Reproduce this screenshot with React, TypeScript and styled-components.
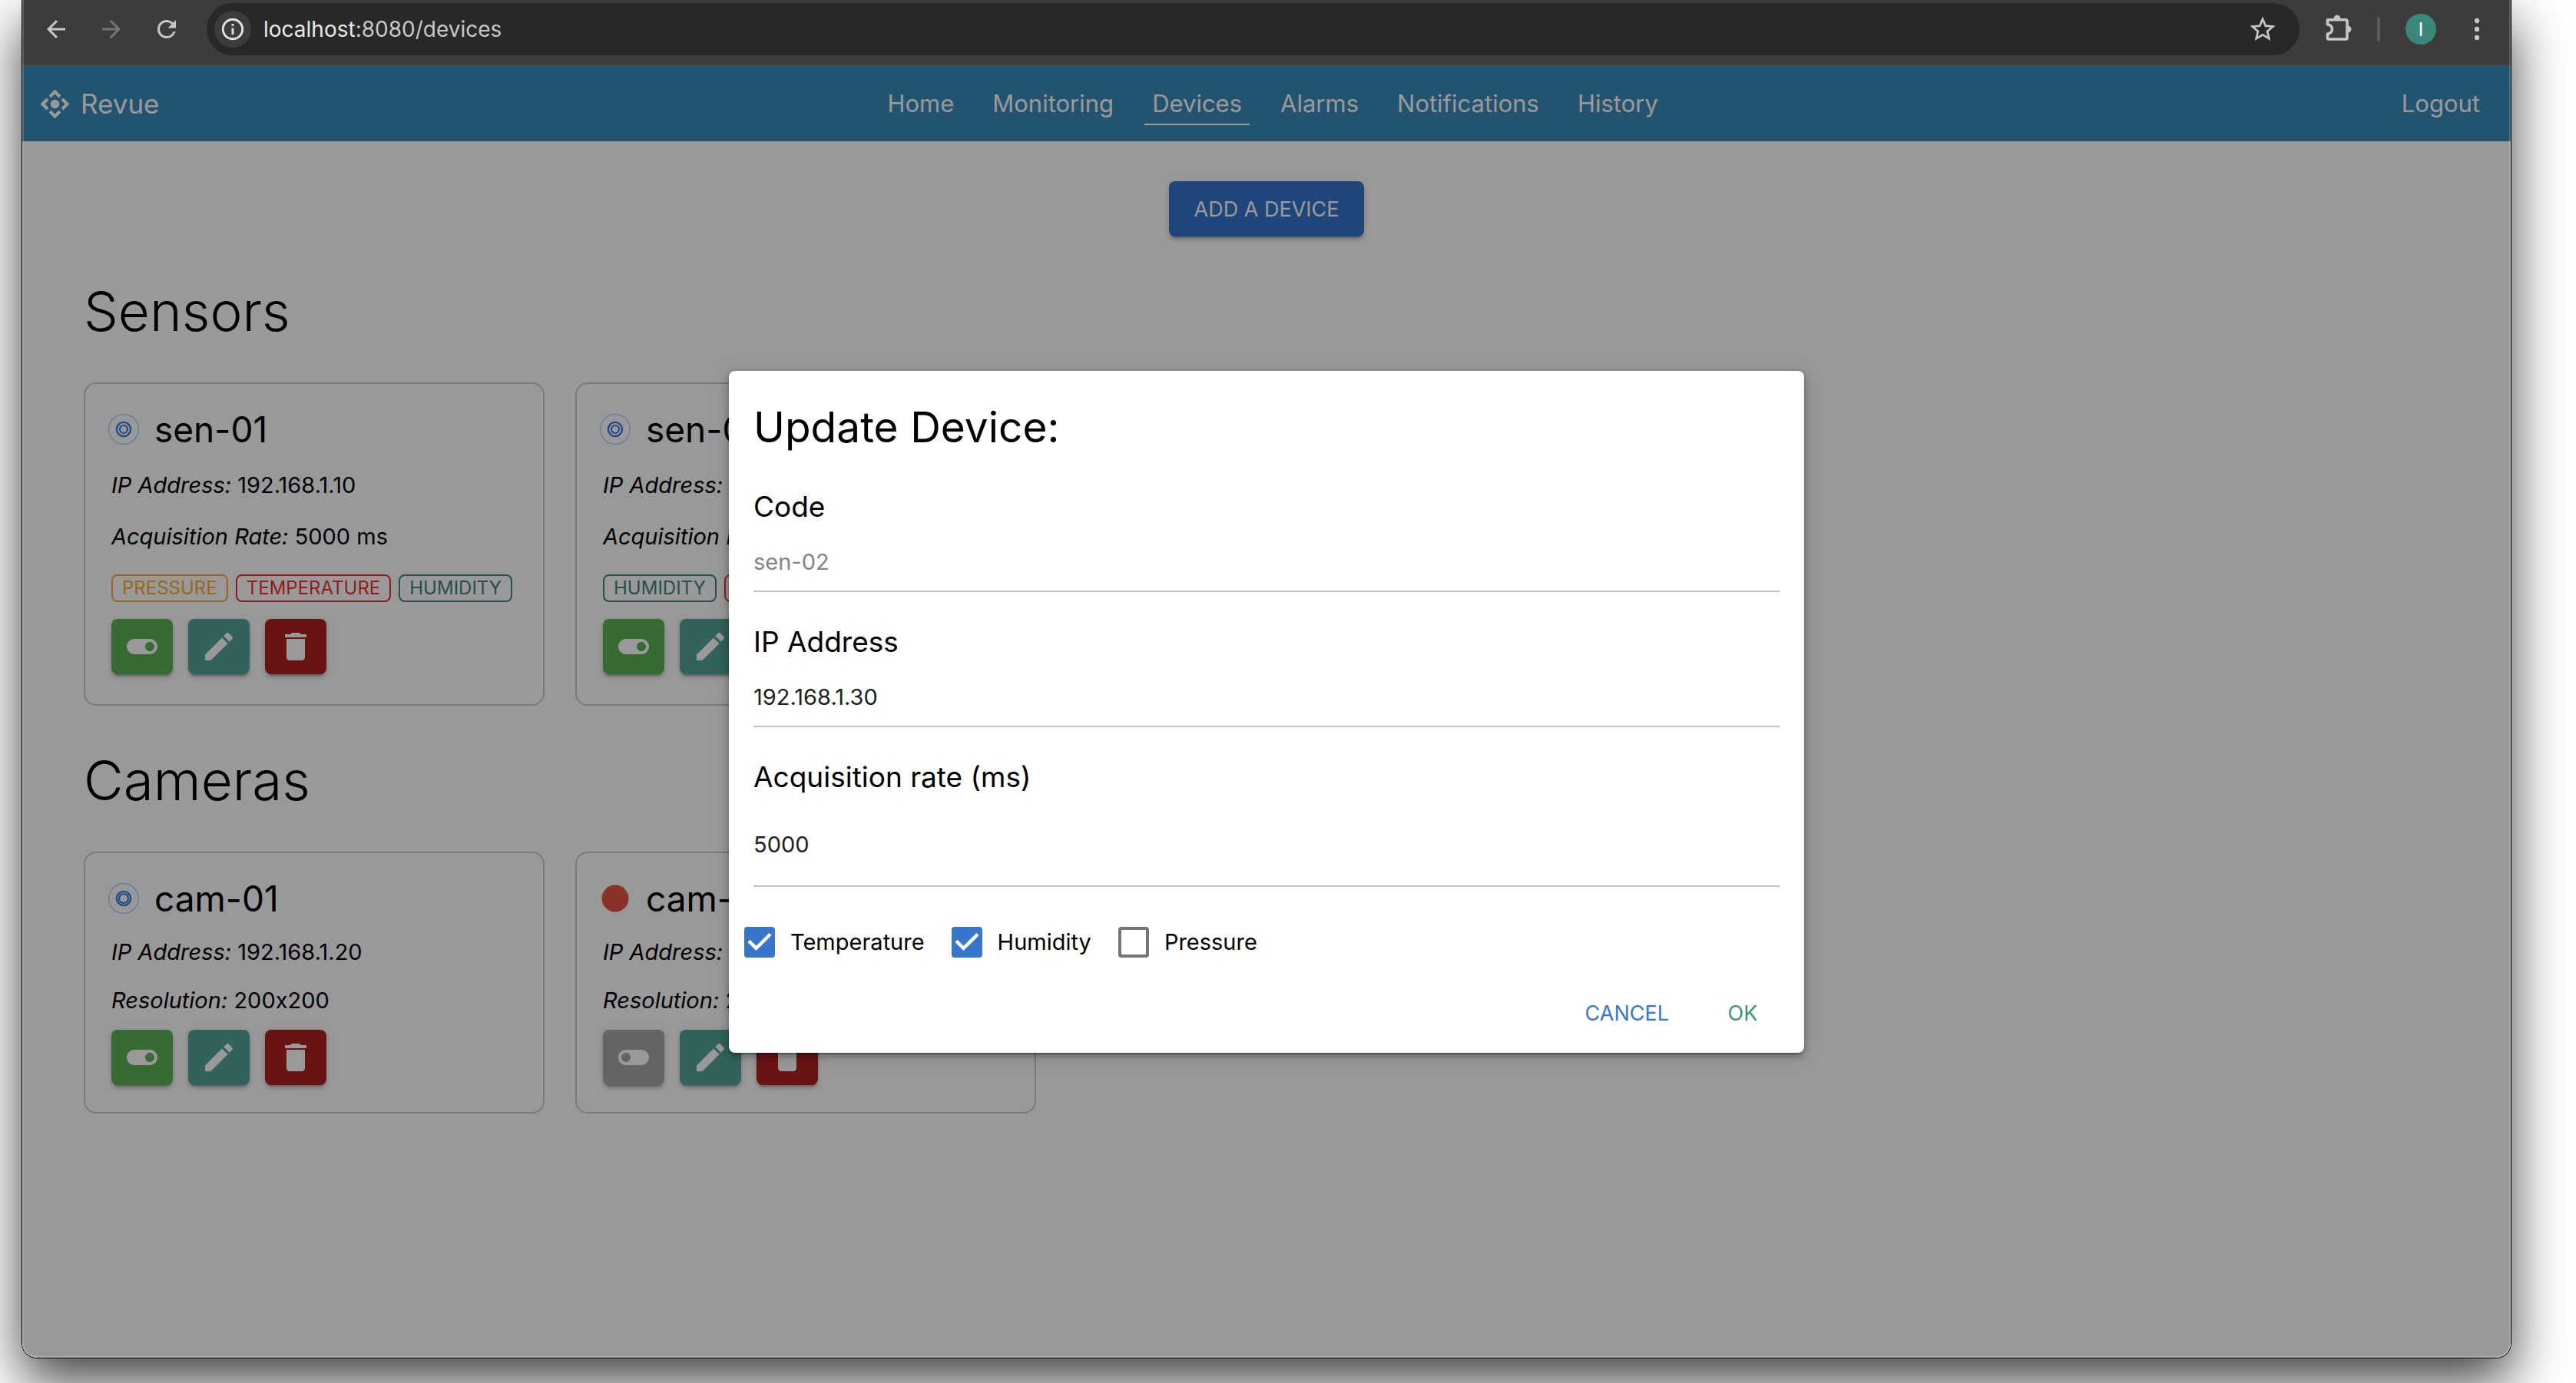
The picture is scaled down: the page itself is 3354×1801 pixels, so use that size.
import React from "react";
import styled, { createGlobalStyle } from "styled-components";
import {
  MdArrowBack,
  MdArrowForward,
  MdDelete,
  MdEdit,
  MdInfoOutline,
  MdRefresh,
  MdStarBorder,
  MdToggleOff,
  MdToggleOn,
} from "react-icons/md";

const GlobalStyle = createGlobalStyle`
  *, *::before, *::after { box-sizing: border-box; }
  body { margin: 0; background: #fff; }
  body, button, input {
    font-family: Inter, "Liberation Sans", sans-serif;
    font-variant-ligatures: no-contextual;
  }
  button { cursor: pointer; }
  svg { display: block; }
`;

/* ---------- browser window ---------- */

const BrowserWindow = styled.div`
  position: relative;
  display: flex;
  flex-direction: column;
  min-height: calc(100vh - 32px);
  margin: 0 84px 32px 28px;
  border: 1px solid #000;
  border-top: 0;
  border-radius: 0 0 20px 20px;
  overflow: hidden;
  box-shadow: 0 30px 70px rgba(0, 0, 0, 0.75);

  &::after {
    content: "";
    position: absolute;
    inset: 0;
    border: 2px solid rgba(255, 255, 255, 0.2);
    border-top: 0;
    border-radius: 0 0 19px 19px;
    pointer-events: none;
  }
`;

const Toolbar = styled.div`
  display: flex;
  align-items: center;
  gap: 34px;
  padding: 4px 24px 12px 26px;
  background: #3c3c3c;
  border-bottom: 2px solid #474747;
  color: #c7c7c7;
`;

const ToolButtons = styled.div<{ $gap: number }>`
  display: flex;
  align-items: center;
  gap: ${(p) => p.$gap}px;
`;

const ToolButton = styled.button`
  padding: 0;
  border: 0;
  background: none;
  color: #c7c7c7;
  &:disabled { color: #757575; }
`;

const AddressBar = styled.div`
  flex: 1;
  display: flex;
  align-items: center;
  gap: 16px;
  height: 68px;
  padding: 0 28px 0 10px;
  border-radius: 34px;
  background: #282828;
`;

const SiteInfo = styled.button`
  display: grid;
  place-items: center;
  width: 48px;
  height: 48px;
  padding: 0;
  border: 0;
  border-radius: 50%;
  background: #3c3c3c;
  color: #e3e3e3;
`;

const Url = styled.div`
  flex: 1;
  font-size: 28px;
  line-height: 40px;
`;

const UrlHost = styled.span`
  color: #e8e8e8;
`;

const Divider = styled.span`
  width: 4px;
  height: 32px;
  border-radius: 2px;
  background: #5e5e5e;
`;

const Avatar = styled.button`
  width: 40px;
  height: 40px;
  padding: 0;
  border: 0;
  border-radius: 50%;
  background: #3c877b;
  color: #fff;
  font-size: 24px;
`;

/* ---------- page ---------- */

const Page = styled.div`
  position: relative;
  flex: 1;
  background: #fff;
`;

const Nav = styled.nav`
  display: flex;
  align-items: center;
  justify-content: space-between;
  height: 98px;
  padding: 0 20px;
  background: #3a8abb;
`;

const Brand = styled.a`
  display: flex;
  align-items: center;
  gap: 11px;
  color: #fff;
  font-size: 35px;
  line-height: 48px;
  text-decoration: none;
`;

const NavList = styled.ul`
  display: flex;
  gap: 30px;
  margin: 0;
  padding: 0;
  list-style: none;
`;

const NavLink = styled.a<{ $active?: boolean; $wide?: boolean }>`
  display: block;
  margin-top: 5px;
  padding: 0 ${(p) => (p.$wide ? 20 : 10)}px 3px;
  border-bottom: 2px solid ${(p) => (p.$active ? "#fff" : "transparent")};
  color: #fff;
  font-size: 31px;
  line-height: 46px;
  text-decoration: none;
`;

const Content = styled.main`
  padding: 52px 80px 80px;
`;

const AddRow = styled.div`
  display: flex;
  justify-content: center;
`;

const raised = `
  box-shadow: 0 6px 2px -4px rgba(0, 0, 0, 0.2), 0 4px 4px rgba(0, 0, 0, 0.14),
    0 2px 10px rgba(0, 0, 0, 0.12);
`;

const AddButton = styled.button`
  height: 72px;
  padding: 0 33px;
  border: 0;
  border-radius: 8px;
  background: #3476cd;
  color: #fff;
  font-size: 27px;
  ${raised}
`;

const SectionTitle = styled.h2`
  margin: 49px 0 45px;
  font-size: 71px;
  line-height: 96px;
  font-weight: 300;
  color: #000;
`;

const CardRow = styled.div`
  display: flex;
  align-items: flex-start;
  gap: 40px;
`;

const Card = styled.article<{ $dense?: boolean }>`
  width: 600px;
  padding: 31px 0 ${(p) => (p.$dense ? 35 : 39)}px;
  border: 2px solid rgba(0, 0, 0, 0.2);
  border-radius: 16px;
`;

const CardHeader = styled.header`
  display: flex;
  align-items: center;
  gap: 20px;
  padding: 0 30px;
`;

const CardTitle = styled.h3`
  margin: 0;
  font-size: 46px;
  line-height: 56px;
  font-weight: 400;
  color: #000;
`;

const Facts = styled.div<{ $dense?: boolean }>`
  padding: ${(p) => (p.$dense ? "10px 34px 1px" : "11px 34px 0")};
  font-size: 29px;
  line-height: ${(p) => (p.$dense ? 63 : 67)}px;
  color: #000;
`;

const Fact = styled.div``;

const Tags = styled.div`
  display: flex;
  gap: 10px;
  padding: 16px 34px;
`;

const Tag = styled.span<{ $color: string }>`
  padding: 0 12px;
  border: 2px solid ${(p) => p.$color};
  border-radius: 8px;
  color: ${(p) => p.$color};
  font-size: 24px;
  line-height: 32px;
`;

const CardActions = styled.div`
  display: flex;
  gap: 20px;
  padding: 6px 34px 0;
`;

const IconButton = styled.button<{ $color: string }>`
  display: grid;
  place-items: center;
  width: 80px;
  height: 72px;
  padding: 0;
  border: 0;
  border-radius: 8px;
  background: ${(p) => p.$color};
  color: #fff;
  font-size: 48px;
  ${raised}
`;

/* ---------- dialog ---------- */

const Backdrop = styled.div`
  position: absolute;
  inset: 0;
  display: flex;
  align-items: center;
  justify-content: center;
  background: rgba(0, 0, 0, 0.4);
`;

const Dialog = styled.form`
  width: 100%;
  max-width: 1400px;
  padding: 32px 0 16px;
  border-radius: 8px;
  background: #fff;
  box-shadow: 0 4px 2px -2px rgba(0, 0, 0, 0.2), 0 4px 10px rgba(0, 0, 0, 0.3),
    0 2px 24px rgba(0, 0, 0, 0.14);
`;

const DialogTitle = styled.h2`
  margin: 0 32px 39px;
  font-size: 55px;
  line-height: 82px;
  font-weight: 400;
  color: #000;
`;

const Fields = styled.div`
  display: flex;
  flex-direction: column;
  gap: 41px;
  padding: 0 32px;
`;

const Field = styled.div`
  display: flex;
  flex-direction: column;
  gap: 14px;
`;

const FieldLabel = styled.label`
  font-size: 37px;
  line-height: 48px;
  color: #000;
`;

const TextInput = styled.input<{ $tall?: boolean }>`
  width: 100%;
  height: ${(p) => (p.$tall ? 105 : 73)}px;
  padding: 0 0 5px;
  border: 0;
  border-bottom: 2px solid #c0c0c0;
  border-radius: 0;
  outline: 0;
  background: none;
  font-size: 29px;
  color: #212121;
  &:disabled { color: #858585; }
`;

const Checks = styled.div`
  display: flex;
  gap: 35px;
  padding: 52px 20px 36px;
`;

const CheckLabel = styled.label`
  display: flex;
  align-items: center;
  gap: 20px;
  font-size: 29px;
  line-height: 40px;
  color: #000;
`;

const CheckBox = styled.span`
  display: grid;
  > * { grid-area: 1 / 1; }
`;

const CheckInput = styled.input`
  appearance: none;
  width: 40px;
  height: 40px;
  margin: 0;
  border: 4px solid #757575;
  border-radius: 4px;
  background: #fff;
  &:checked {
    border-color: #3677cc;
    background: #3677cc;
  }
  & + svg { display: none; pointer-events: none; }
  &:checked + svg { display: block; }
`;

const DialogActions = styled.div`
  display: flex;
  justify-content: flex-end;
  gap: 16px;
  padding: 0 16px;
`;

const TextButton = styled.button<{ $color: string }>`
  min-width: 128px;
  height: 72px;
  padding: 0 16px;
  border: 0;
  background: none;
  color: ${(p) => p.$color};
  font-size: 27px;
`;

/* ---------- drawings ---------- */

const LogoIcon = () => (
  <svg width="45" height="45" viewBox="-22.5 -22.5 45 45" fill="none" aria-hidden="true">
    <path
      d="M-6.5 -9.5L0 -16L6.5 -9.5M9.500 -6.500L16 0L9.500 6.500M6.500 9.500L0 16L-6.500 9.500M-9.500 6.500L-16 0L-9.500 -6.500"
      stroke="currentColor"
      strokeWidth="4.200"
    />
    <circle r="5.800" fill="currentColor" />
  </svg>
);

const PuzzleIcon = () => (
  <svg width="34" height="40" viewBox="0 0 34 40" aria-hidden="true">
    <path
      d="M4 7.800H26.500a1.500 1.500 0 0 1 1.500 1.500V31.500a1.500 1.500 0 0 1-1.500 1.500H4a1.500 1.500 0 0 1-1.500-1.500V26a6 6 0 0 0 0-12V7.800Z"
      fill="none"
      stroke="currentColor"
      strokeWidth="3.600"
      strokeLinejoin="round"
    />
    <path d="M10.500 7a4.500 5.500 0 0 1 9 0zM29 15.500a4.500 4.500 0 0 1 0 9z" fill="currentColor" />
  </svg>
);

const MenuDots = () => (
  <svg width="40" height="40" viewBox="0 0 40 40" fill="currentColor" aria-hidden="true">
    <circle cx="20" cy="9" r="3.200" />
    <circle cx="20" cy="20" r="3.200" />
    <circle cx="20" cy="31" r="3.200" />
  </svg>
);

const StatusIcon = ({ state, ring = 5 }: { state: "on" | "off"; ring?: number }) => (
  <svg width="40" height="40" viewBox="0 0 40 40" fill="none" role="img" aria-label={state}>
    {state === "on" ? (
      <>
        <circle cx="20" cy="20" r="19.400" stroke="#a6c8ff" strokeWidth="1.200" />
        <circle cx="20" cy="20" r="9.100" stroke="#3a7be0" strokeWidth="2.400" />
        <circle cx="20" cy="20" r={ring} stroke="#3a7be0" strokeWidth="2.200" />
      </>
    ) : (
      <circle cx="20" cy="20" r="17.500" fill="#e65243" />
    )}
  </svg>
);

const CheckMark = () => (
  <svg width="40" height="40" viewBox="3 3 18 18" fill="#fff" aria-hidden="true">
    <path d="M10 17l-5-5 1.410-1.410L10 14.170l7.590-7.590L19 8z" />
  </svg>
);

/* ---------- data ---------- */

const tagColors: Record<string, string> = {
  PRESSURE: "#ffab2e",
  TEMPERATURE: "#f5302a",
  HUMIDITY: "#3c8580",
};

type Device = {
  code: string;
  on: boolean;
  facts: [string, string][];
  tags?: string[];
};

const sensors: Device[] = [
  {
    code: "sen-01",
    on: true,
    facts: [["IP Address:", "192.168.1.10"], ["Acquisition Rate:", "5000 ms"]],
    tags: ["PRESSURE", "TEMPERATURE", "HUMIDITY"],
  },
  {
    code: "sen-02",
    on: true,
    facts: [["IP Address:", "192.168.1.30"], ["Acquisition Rate:", "5000 ms"]],
    tags: ["HUMIDITY", "TEMPERATURE"],
  },
];

const cameras: Device[] = [
  { code: "cam-01", on: true, facts: [["IP Address:", "192.168.1.20"], ["Resolution:", "200x200"]] },
  { code: "cam-02", on: false, facts: [["IP Address:", "192.168.1.40"], ["Resolution:", "200x200"]] },
];

const links = ["Home", "Monitoring", "Devices", "Alarms", "Notifications", "History"];

const DeviceCard = ({ device }: { device: Device }) => {
  const dense = !device.tags;
  return (
    <Card $dense={dense}>
      <CardHeader>
        <StatusIcon state={device.on ? "on" : "off"} ring={dense ? 6 : 5} />
        <CardTitle>{device.code}</CardTitle>
      </CardHeader>
      <Facts $dense={dense}>
        {device.facts.map(([name, value]) => (
          <Fact key={name}>
            <em>{name}</em> {value}
          </Fact>
        ))}
      </Facts>
      {device.tags && (
        <Tags>
          {device.tags.map((tag) => (
            <Tag key={tag} $color={tagColors[tag]}>{tag}</Tag>
          ))}
        </Tags>
      )}
      <CardActions>
        <IconButton $color={device.on ? "#5ab452" : "#a7a7a7"} aria-label="Toggle device">
          {device.on ? <MdToggleOn /> : <MdToggleOff />}
        </IconButton>
        <IconButton $color="#52a398" aria-label="Edit device"><MdEdit /></IconButton>
        <IconButton $color="#b12121" aria-label="Delete device"><MdDelete /></IconButton>
      </CardActions>
    </Card>
  );
};

const Check = ({ label, checked }: { label: string; checked?: boolean }) => (
  <CheckLabel>
    <CheckBox>
      <CheckInput type="checkbox" defaultChecked={checked} />
      <CheckMark />
    </CheckBox>
    {label}
  </CheckLabel>
);

export default function App() {
  return (
    <>
      <GlobalStyle />
      <BrowserWindow>
        <Toolbar>
          <ToolButtons $gap={36}>
            <ToolButton aria-label="Back"><MdArrowBack size={36} /></ToolButton>
            <ToolButton aria-label="Forward" disabled><MdArrowForward size={36} /></ToolButton>
            <ToolButton aria-label="Reload"><MdRefresh size={36} /></ToolButton>
          </ToolButtons>
          <AddressBar>
            <SiteInfo aria-label="Site information"><MdInfoOutline size={34} /></SiteInfo>
            <Url><UrlHost>localhost</UrlHost>:8080/devices</Url>
            <ToolButton aria-label="Bookmark"><MdStarBorder size={40} /></ToolButton>
          </AddressBar>
          <ToolButtons $gap={33}>
            <ToolButton aria-label="Extensions"><PuzzleIcon /></ToolButton>
            <Divider />
            <Avatar>I</Avatar>
            <ToolButton aria-label="Menu"><MenuDots /></ToolButton>
          </ToolButtons>
        </Toolbar>
        <Page>
          <Nav>
            <Brand href="#home"><LogoIcon />Revue</Brand>
            <NavList>
              {links.map((link) => (
                <li key={link}>
                  <NavLink href={`#${link.toLowerCase()}`} $active={link === "Devices"}>{link}</NavLink>
                </li>
              ))}
            </NavList>
            <NavLink href="#logout" $wide>Logout</NavLink>
          </Nav>
          <Content>
            <AddRow><AddButton>ADD A DEVICE</AddButton></AddRow>
            <section>
              <SectionTitle>Sensors</SectionTitle>
              <CardRow>{sensors.map((d) => <DeviceCard key={d.code} device={d} />)}</CardRow>
            </section>
            <section>
              <SectionTitle>Cameras</SectionTitle>
              <CardRow>{cameras.map((d) => <DeviceCard key={d.code} device={d} />)}</CardRow>
            </section>
          </Content>
          <Backdrop>
            <Dialog role="dialog" aria-labelledby="dialog-title">
              <DialogTitle id="dialog-title">Update Device:</DialogTitle>
              <Fields>
                <Field>
                  <FieldLabel htmlFor="code">Code</FieldLabel>
                  <TextInput id="code" defaultValue="sen-02" disabled />
                </Field>
                <Field>
                  <FieldLabel htmlFor="ip">IP Address</FieldLabel>
                  <TextInput id="ip" defaultValue="192.168.1.30" />
                </Field>
                <Field>
                  <FieldLabel htmlFor="rate">Acquisition rate (ms)</FieldLabel>
                  <TextInput id="rate" defaultValue="5000" $tall />
                </Field>
              </Fields>
              <Checks>
                <Check label="Temperature" checked />
                <Check label="Humidity" checked />
                <Check label="Pressure" />
              </Checks>
              <DialogActions>
                <TextButton type="button" $color="#3677cc">CANCEL</TextButton>
                <TextButton type="button" $color="#419280">OK</TextButton>
              </DialogActions>
            </Dialog>
          </Backdrop>
        </Page>
      </BrowserWindow>
    </>
  );
}
